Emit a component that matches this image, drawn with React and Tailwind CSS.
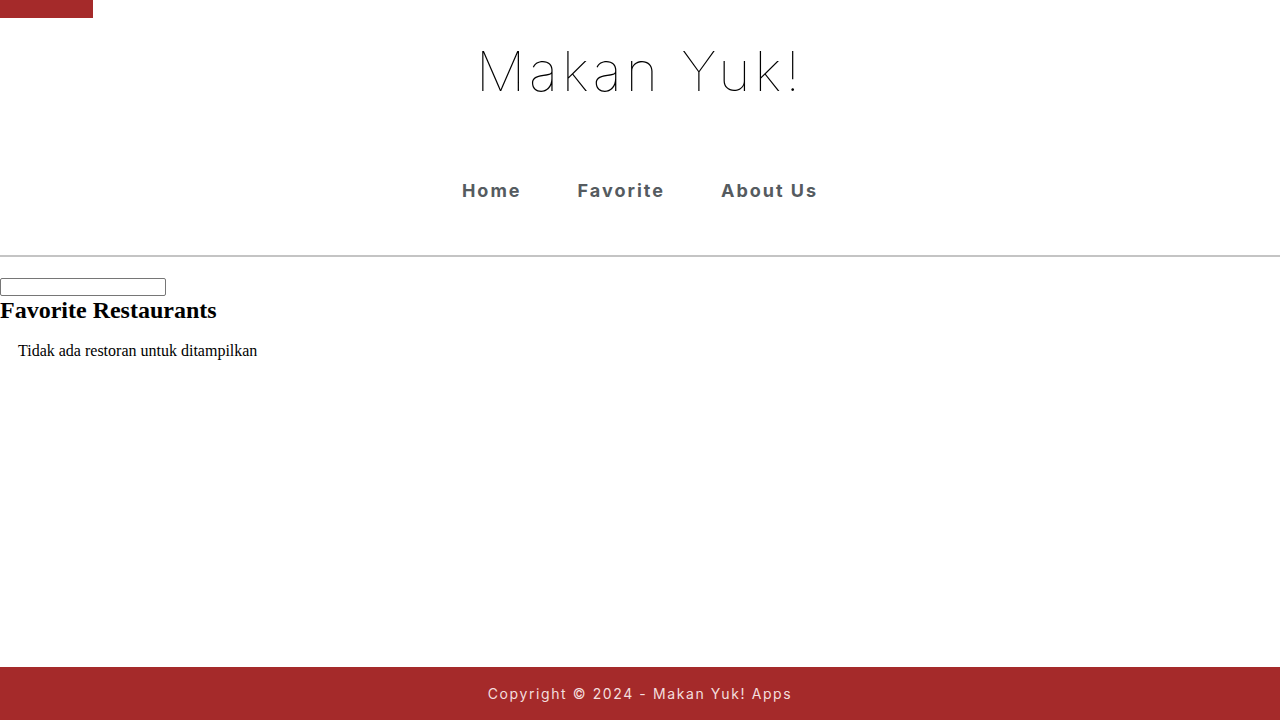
export default function App() {
  return (
    <div className="relative flex min-h-screen flex-col bg-white">
      <a
        href="#main"
        className="absolute left-0 top-0 h-[18px] w-[93px] bg-[#a52a2a]"
        aria-label="Skip to content"
      />

      <header className="flex flex-col items-center">
        <h1 className="mt-[33px] font-['Inter',sans-serif] text-[55px] font-thin leading-[76px] tracking-[4px] text-black">
          Makan Yuk!
        </h1>
        <nav className="mt-[68px] flex gap-[56px] font-['Inter',sans-serif] text-[18px] font-bold tracking-[2px] text-[#555b60]">
          <a href="#/home">Home</a>
          <a href="#/favorite">Favorite</a>
          <a href="#/about">About Us</a>
        </nav>
      </header>

      <hr className="mt-[51px] border-t-2 border-[#c4c4c4]" />

      <main id="main" className="flex-1 pt-[21px] font-['Liberation_Serif',serif] text-black">
        <input
          type="text"
          className="block h-[18px] w-[166px] rounded-[2px] border border-[#767676] bg-white"
        />
        <h2 className="text-[24px] font-bold leading-[28px]">Favorite Restaurants</h2>
        <p className="mt-[17px] pl-[18px] text-[16px] leading-[20px]">
          Tidak ada restoran untuk ditampilkan
        </p>
      </main>

      <footer className="flex h-[53px] items-center justify-center bg-[#a52a2a] font-['Inter',sans-serif] text-[14px] tracking-[1.6px] text-[#f3dede]">
        Copyright © 2024 - Makan Yuk! Apps
      </footer>
    </div>
  );
}
